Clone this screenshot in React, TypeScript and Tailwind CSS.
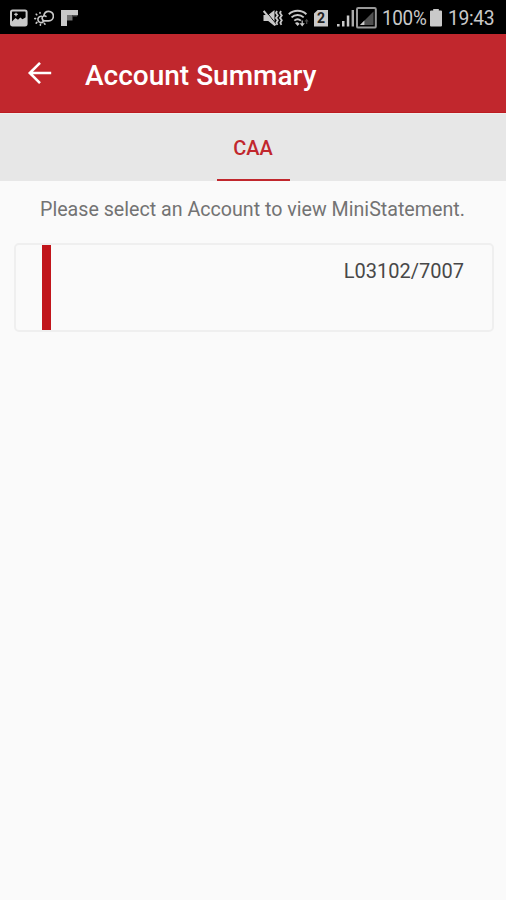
import * as React from "react";

function PictureIcon() {
  return (
    <svg className="ml-[10px] h-[18px] w-[18px]" viewBox="0 0 18 18">
      <rect x="1" y="1.4" width="15.6" height="15" rx="1.6" fill="none" stroke="#c9c9c9" strokeWidth="2" />
      <path d="M4.2 5.4h3.6M6 3.8v3.4" stroke="#c9c9c9" strokeWidth="1.3" />
      <path d="M2 16v-3.5L5.4 9 8 10.8 10.4 8.6l2 1.6 4-2.2v8z" fill="#c9c9c9" />
    </svg>
  );
}

function WeatherIcon() {
  return (
    <svg className="ml-[6px] h-[18px] w-5" viewBox="0 0 20 18" fill="none" stroke="#c9c9c9" strokeLinecap="round">
      <path d="M9.4 12.6a3.2 3.2 0 1 1-2-5.4" strokeWidth="1.6" />
      <path d="M6 4.2v-.6M2.8 5.8l-.6-.6M1.6 9.6h-.8M2.9 13.4l-.7.7M6.4 15.4v.8M10.4 14.4l.6.8" strokeWidth="1.6" />
      <path d="M10.4 11.8a2.6 2.6 0 0 1-.6-5c.5-3 2.4-4.4 4.8-4.4a4.6 4.6 0 0 1 .2 9.4z" strokeWidth="1.7" />
      <path d="M9.8 6.8c.8-.2 1.6 0 2.2.6" strokeWidth="1.5" />
    </svg>
  );
}

function FlipIcon() {
  return (
    <svg className="ml-[7px] h-[18px] w-[18px]" viewBox="0 0 18 18">
      <path d="M0 1h17v5H6v11H0z" fill="#c9c9c9" />
      <path d="M6 6h5.5v5.5H6z" fill="#737373" />
      <path d="M11.5 6H17l-1 1.5h-4.5z" fill="#555" />
    </svg>
  );
}

function MuteIcon() {
  return (
    <svg className="h-5 w-5" viewBox="0 0 20 20">
      <path d="M.5 7h4.7L11.5 2v16l-6.3-5H.5z" fill="#c9c9c9" />
      <path d="M2 2.2 13.4 16.4" stroke="#000" strokeWidth="1" />
      <path d="m.7 3 11.8 14.4" stroke="#c9c9c9" strokeWidth="2" />
      <path d="m14 3-1 2 1.8 2.4L13 9.9l1.8 2.4-1.4 2.5 1 2M18 3l-1 2 1.8 2.4L17 9.9l1.8 2.4-1.4 2.5 1 2" fill="none" stroke="#c9c9c9" strokeWidth="1.8" />
    </svg>
  );
}

function WifiIcon() {
  return (
    <svg className="ml-[5px] h-5 w-[23px]" viewBox="0 0 23 20" fill="none" stroke="#c9c9c9">
      <path d="M.8 6.2a13 13 0 0 1 17.6 0M3.5 9.4a9 9 0 0 1 12.2 0M6.3 12.6a5 5 0 0 1 6.6 0" strokeWidth="1.9" />
      <path d="m7 15 2.6 3 2-2c-.9-1.7-3.2-2.3-4.6-1Z" fill="#c9c9c9" stroke="none" />
      <path d="M11.6 15.2h5.2l-2.6 3.2zM13.6 12.5h1.2v3h-1.2z" fill="#c9c9c9" stroke="none" />
      <path d="m16.6 13.5 2-2.8 2 2.8zM18 13.5h1.3V16H18z" fill="#484848" stroke="none" />
    </svg>
  );
}

function SimIcon() {
  return (
    <div className="ml-[3px] flex h-[17px] w-[14px] items-center justify-center bg-[#c9c9c9] text-[14px] leading-none font-bold text-[#222] [clip-path:polygon(30%_0,100%_0,100%_100%,0_100%,0_24%)]">
      2
    </div>
  );
}

function SignalIcon() {
  return (
    <svg className="ml-[9px] h-[18px] w-[18px]" viewBox="0 0 18 18" fill="#c9c9c9">
      <path d="M0 15h2.6v2.5H0zM5 12h2.5v5.5H5zM9.8 6.5h2.5v11H9.8z" />
      <path d="M14.6 1H17v16.5h-2.4z" fill="#aaa" />
    </svg>
  );
}

function EmptySignalIcon() {
  return (
    <svg className="ml-[1px] h-[22px] w-[22px]" viewBox="0 0 22 22">
      <rect x="1" y="1" width="18.8" height="19.6" rx="1.2" fill="none" stroke="#999" strokeWidth="2" />
      <path d="M4 18 17.5 4.5V18z" fill="#505050" />
      <path d="M4 18 8.4 13.6V18z" fill="#c9c9c9" />
    </svg>
  );
}

function BatteryIcon() {
  return (
    <svg className="h-[18px] w-3" viewBox="0 0 12 18">
      <path d="M3.2 0h5.6v1.6H11q1 0 1 1v14q0 1-1 1H1q-1 0-1-1v-14q0-1 1-1h2.2z" fill="#c9c9c9" />
    </svg>
  );
}

function StatusBar() {
  return (
    <div className="flex h-[34px] items-center justify-between bg-black pt-[2px] text-[21px] text-[#c9c9c9]">
      <div className="flex items-center">
        <PictureIcon />
        <WeatherIcon />
        <FlipIcon />
      </div>
      <div className="flex items-center pr-[10px]">
        <MuteIcon />
        <WifiIcon />
        <SimIcon />
        <SignalIcon />
        <EmptySignalIcon />
        <span className="ml-[4px] w-[48px] origin-left scale-x-90 pt-px tracking-[-0.35px]">100%</span>
        <BatteryIcon />
        <span className="ml-[6px] w-[48px] origin-left scale-x-[0.92] pt-px tracking-[-0.4px]">19:43</span>
      </div>
    </div>
  );
}

function AppBar() {
  return (
    <header className="flex h-[79px] items-center border-b border-[#bd1b21] bg-[#c1272d] text-white">
      <button type="button" aria-label="Back" className="ml-[27px] -mt-[1px]">
        <svg className="h-6 w-[25px]" viewBox="0 0 25 24" fill="none" stroke="currentColor" strokeWidth="2.6">
          <path d="M24.2 12H2.8M13 1.8 2.8 12 13 22.2" />
        </svg>
      </button>
      <h1 className="ml-[33px] pt-[5px] text-[28px] leading-8 font-medium">Account Summary</h1>
    </header>
  );
}

function Tabs() {
  return (
    <nav className="flex h-[68px] justify-center border-t border-[#efefed] bg-[#e7e7e7]">
      <button
        type="button"
        className="h-[67px] w-[73px] border-b-2 border-[#c1272d] pt-[2px] text-[20px] font-medium text-[#c1272d]"
      >
        CAA
      </button>
    </nav>
  );
}

function AccountCard({ number }: { number: string }) {
  return (
    <div className="mr-[12px] ml-[14px] mt-[21px] flex h-[89px] justify-between rounded-[5px] border-2 border-[#efefef] pr-[28px] pl-[26px]">
      <div className="w-[9px] bg-[#c1151b]" />
      <span className="pt-[14px] text-[20px] leading-6 text-[#484848]">{number}</span>
    </div>
  );
}

export default function App() {
  return (
    <div className="h-[900px] w-[506px] overflow-hidden bg-[#fafafa] font-[Roboto,sans-serif]">
      <StatusBar />
      <AppBar />
      <Tabs />
      <p className="mt-[17px] pl-[40px] text-[19.65px] leading-6 whitespace-nowrap text-[#737373]">
        Please select an Account to view MiniStatement.
      </p>
      <AccountCard number="L03102/7007" />
    </div>
  );
}
